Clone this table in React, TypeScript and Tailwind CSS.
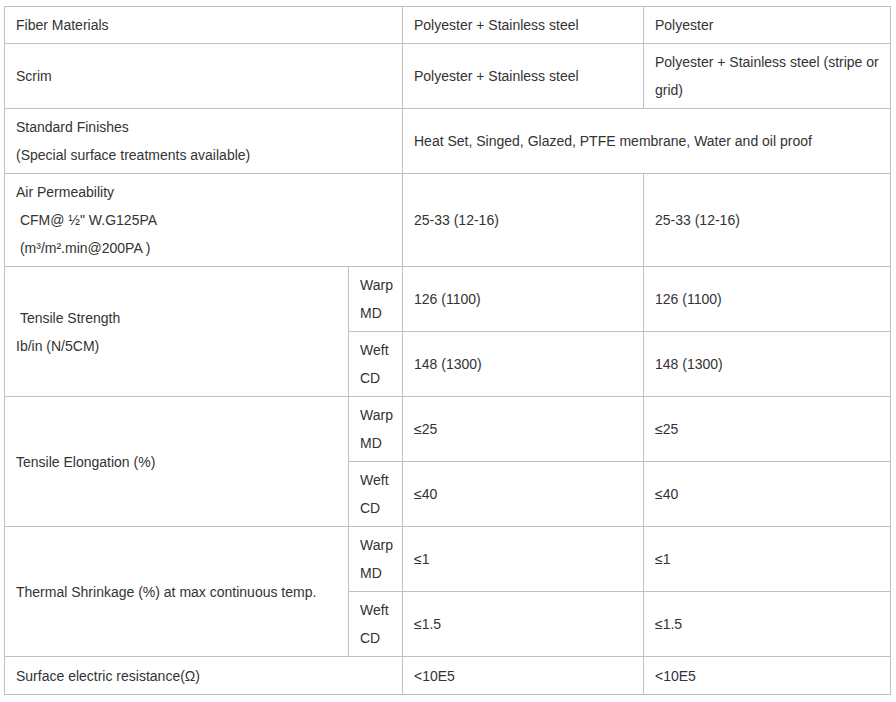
import React from 'react'

const cell = 'border border-[#bfbfbf] px-[11px] py-1 align-middle'

export default function App() {
  return (
    <div className="bg-white w-[896px] h-[702px] pt-[6px] pl-[4px] text-[14px] leading-[28px] text-[#333]" style={{ fontFamily: '"Liberation Sans", Arial, sans-serif' }}>
      <table className="border-collapse table-fixed w-[887px]">
        <colgroup>
          <col className="w-[344px]" />
          <col className="w-[54px]" />
          <col className="w-[241px]" />
          <col className="w-[247px]" />
        </colgroup>
        <tbody>
          <tr>
            <td className={cell} colSpan={2}>Fiber Materials</td>
            <td className={cell}>Polyester + Stainless steel</td>
            <td className={cell}>Polyester</td>
          </tr>
          <tr>
            <td className={cell} colSpan={2}>Scrim</td>
            <td className={cell}>Polyester + Stainless steel</td>
            <td className={cell}>Polyester + Stainless steel (stripe or grid)</td>
          </tr>
          <tr>
            <td className={cell} colSpan={2}>
              Standard Finishes<br />(Special surface treatments available)
            </td>
            <td className={cell} colSpan={2}>Heat Set, Singed, Glazed, PTFE membrane, Water and oil proof</td>
          </tr>
          <tr>
            <td className={cell} colSpan={2}>
              Air Permeability<br />&nbsp;CFM@ ½" W.G125PA<br />&nbsp;(m³/m².min@200PA )
            </td>
            <td className={cell}>25-33 (12-16)</td>
            <td className={cell}>25-33 (12-16)</td>
          </tr>
          <tr>
            <td className={cell} rowSpan={2}>
              &nbsp;Tensile Strength<br />Ib/in (N/5CM)
            </td>
            <td className={cell}>Warp<br />MD</td>
            <td className={cell}>126 (1100)</td>
            <td className={cell}>126 (1100)</td>
          </tr>
          <tr>
            <td className={cell}>Weft<br />CD</td>
            <td className={cell}>148 (1300)</td>
            <td className={cell}>148 (1300)</td>
          </tr>
          <tr>
            <td className={cell} rowSpan={2}>Tensile Elongation (%)</td>
            <td className={cell}>Warp<br />MD</td>
            <td className={cell}>≤25</td>
            <td className={cell}>≤25</td>
          </tr>
          <tr>
            <td className={cell}>Weft<br />CD</td>
            <td className={cell}>≤40</td>
            <td className={cell}>≤40</td>
          </tr>
          <tr>
            <td className={cell} rowSpan={2}>Thermal Shrinkage (%) at max continuous temp.</td>
            <td className={cell}>Warp<br />MD</td>
            <td className={cell}>≤1</td>
            <td className={cell}>≤1</td>
          </tr>
          <tr>
            <td className={cell}>Weft<br />CD</td>
            <td className={cell}>≤1.5</td>
            <td className={cell}>≤1.5</td>
          </tr>
          <tr>
            <td className={`${cell} pt-[5px]`} colSpan={2}>Surface electric resistance(Ω)</td>
            <td className={`${cell} pt-[5px]`}>&lt;10E5</td>
            <td className={`${cell} pt-[5px]`}>&lt;10E5</td>
          </tr>
        </tbody>
      </table>
    </div>
  )
}
